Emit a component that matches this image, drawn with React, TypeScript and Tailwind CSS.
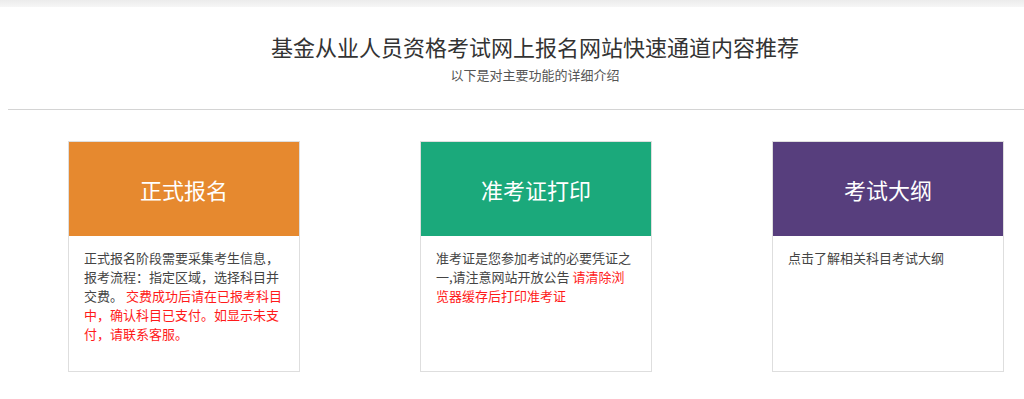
import React from "react";

const font = { fontFamily: '"Microsoft YaHei", "Noto Sans CJK SC", "Noto Sans", sans-serif' };

function Card({
  title,
  color,
  children,
}: {
  title: string;
  color: string;
  children: React.ReactNode;
}) {
  return (
    <div className="w-[232px] h-[231px] border border-[#dedede] bg-white flex flex-col shrink-0">
      <div className={`h-[94px] ${color} flex items-center justify-center text-white text-[22px]`}>
        {title}
      </div>
      <div className="px-[15px] pt-[12px] text-[13px] leading-[19px] text-[#444]">{children}</div>
    </div>
  );
}

export default function App() {
  return (
    <div className="w-[1024px] h-[399px] bg-white overflow-hidden" style={font}>
      <div className="h-[7px] bg-gradient-to-b from-[#ececec] to-[#f6f6f6]" />
      <div className="pt-[24px] pl-[46px] text-center">
        <h1 className="text-[22px] leading-[30px] text-[#333] font-normal">基金从业人员资格考试网上报名网站快速通道内容推荐</h1>
        <p className="mt-[5px] text-[13px] leading-[18px] text-[#555]">以下是对主要功能的详细介绍</p>
      </div>
      <div className="ml-[8px] mt-[25px] h-[1px] bg-[#d4d4d4]" />
      <div className="flex pl-[68px] pt-[31px] gap-[120px]">
        <Card title="正式报名" color="bg-[#e6892f]">
          正式报名阶段需要采集考生信息，报考流程：指定区域，选择科目并交费。{" "}
          <span className="text-[#ff1a1a]">交费成功后请在已报考科目中，确认科目已支付。如显示未支付，请联系客服。</span>
        </Card>
        <Card title="准考证打印" color="bg-[#1ba97b]">
          准考证是您参加考试的必要凭证之一,请注意网站开放公告{" "}
          <span className="text-[#ff1a1a]">请清除浏览器缓存后打印准考证</span>
        </Card>
        <Card title="考试大纲" color="bg-[#573e7d]">
          点击了解相关科目考试大纲
        </Card>
      </div>
    </div>
  );
}
